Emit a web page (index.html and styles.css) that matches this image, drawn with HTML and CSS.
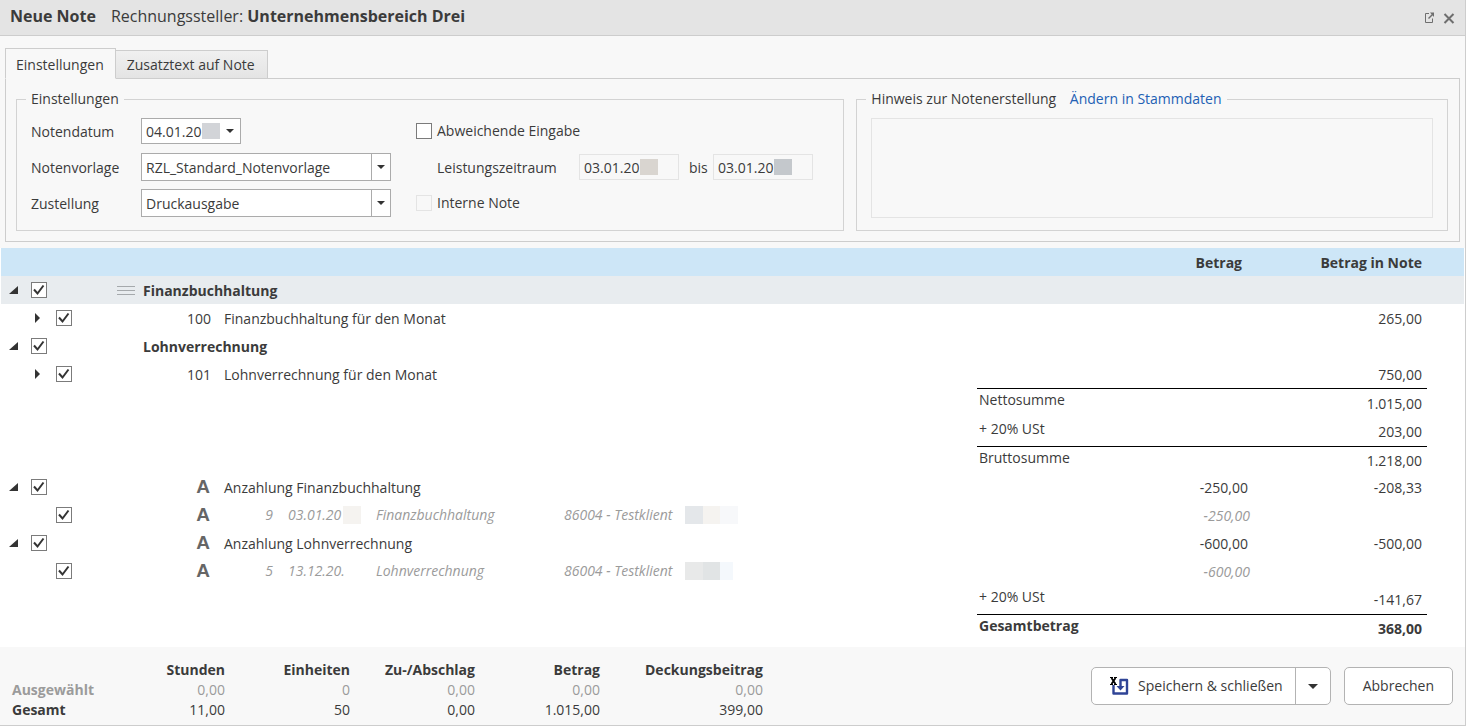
FILE: index.html
```html
<!DOCTYPE html>
<html lang="de">
<head>
<meta charset="utf-8">
<title>Neue Note</title>
<link rel="stylesheet" href="styles.css">
</head>
<body>
<main class="window">
  <header class="titlebar">
    <h1 class="title">Neue Note</h1>
    <p class="issuer">Rechnungssteller: <strong>Unternehmensbereich Drei</strong></p>
    <div class="window-actions">
      <button type="button" class="icon-button" aria-label="In eigenem Fenster öffnen">
        <svg width="12" height="12" viewBox="0 0 12 12" fill="none" stroke="#6e6e6e"><path d="M6 1.500H2.500V10.500H9.500V6.500"/><path d="M5.500 6.500L9.500 2.500" stroke-width="1.500"/><path d="M7 0.500H11V5Z" fill="#6e6e6e" stroke="none"/></svg>
      </button>
      <button type="button" class="icon-button" aria-label="Schließen">
        <svg width="12" height="12" viewBox="0 0 12 12" fill="none" stroke="#6e6e6e" stroke-width="2"><path d="M1.500 2L10.500 11M10.500 2L1.500 11"/></svg>
      </button>
    </div>
  </header>

  <section class="settings">
    <div class="tabs" role="tablist">
      <button type="button" class="tab tab-active" role="tab" aria-selected="true">Einstellungen</button>
      <button type="button" class="tab" role="tab" aria-selected="false">Zusatztext auf Note</button>
    </div>
    <div class="tab-panel" role="tabpanel">
      <fieldset class="group">
        <legend>Einstellungen</legend>
        <div class="form">
          <div class="form-left">
            <label for="date">Notendatum</label>
            <div class="date-box">
              <input id="date" class="date-input" type="text" value="04.01.20">
              <span class="mask mask-a"></span>
              <button type="button" class="date-open" aria-label="Kalender öffnen"><span class="caret"></span></button>
            </div>
            <label for="template">Notenvorlage</label>
            <div class="combo">
              <select id="template"><option>RZL_Standard_Notenvorlage</option></select>
              <span class="combo-arrow"><span class="caret"></span></span>
            </div>
            <label for="delivery">Zustellung</label>
            <div class="combo">
              <select id="delivery"><option>Druckausgabe</option></select>
              <span class="combo-arrow"><span class="caret"></span></span>
            </div>
          </div>
          <div class="form-right">
            <label class="check-label"><input type="checkbox" class="check">Abweichende Eingabe</label>
            <div class="period">
              <label class="period-label" for="from">Leistungszeitraum</label>
              <div class="date-box date-off">
                <input id="from" class="date-input" type="text" value="03.01.20" disabled>
                <span class="mask mask-b"></span>
              </div>
              <label class="until" for="to">bis</label>
              <div class="date-box date-off">
                <input id="to" class="date-input" type="text" value="03.01.20" disabled>
                <span class="mask mask-c"></span>
              </div>
            </div>
            <label class="check-label"><input type="checkbox" class="check" disabled>Interne Note</label>
          </div>
        </div>
      </fieldset>
      <fieldset class="group group-note">
        <legend>Hinweis zur Notenerstellung <a class="link" href="#">Ändern in Stammdaten</a></legend>
        <textarea class="note" aria-label="Hinweis zur Notenerstellung" disabled></textarea>
      </fieldset>
    </div>
  </section>

  <div class="items-wrap">
  <table class="items">
    <colgroup>
      <col class="col-tree"><col class="col-handle"><col class="col-number"><col class="col-text"><col class="col-sum"><col class="col-amount"><col class="col-note"><col class="col-end">
    </colgroup>
    <thead>
      <tr><th></th><th></th><th></th><th></th><th></th><th class="num head-amount">Betrag</th><th class="num">Betrag in Note</th><th></th></tr>
    </thead>
    <tbody>
      <tr class="selected">
        <td><div class="tree"><button type="button" class="toggle open" aria-label="Zuklappen"></button><input type="checkbox" class="check" aria-label="Finanzbuchhaltung" checked></div></td>
        <td><div class="handle"></div></td>
        <td colspan="2" class="strong">Finanzbuchhaltung</td>
        <td></td><td></td><td></td><td></td>
      </tr>
      <tr>
        <td><div class="tree child"><button type="button" class="toggle" aria-label="Aufklappen"></button><input type="checkbox" class="check" aria-label="Finanzbuchhaltung für den Monat" checked></div></td>
        <td></td><td class="code">100</td><td>Finanzbuchhaltung für den Monat</td>
        <td></td><td></td><td class="num">265,00</td><td></td>
      </tr>
      <tr>
        <td><div class="tree"><button type="button" class="toggle open" aria-label="Zuklappen"></button><input type="checkbox" class="check" aria-label="Lohnverrechnung" checked></div></td>
        <td></td>
        <td colspan="2" class="strong">Lohnverrechnung</td>
        <td></td><td></td><td></td><td></td>
      </tr>
      <tr>
        <td><div class="tree child"><button type="button" class="toggle" aria-label="Aufklappen"></button><input type="checkbox" class="check" aria-label="Lohnverrechnung für den Monat" checked></div></td>
        <td></td><td class="code">101</td><td>Lohnverrechnung für den Monat</td>
        <td></td><td></td><td class="num">750,00</td><td></td>
      </tr>
      <tr class="sum ruled">
        <td colspan="4"></td><td class="line label">Nettosumme</td><td class="line"></td><td class="line num">1.015,00</td><td></td>
      </tr>
      <tr class="sum">
        <td colspan="4"></td><td class="label">+ 20% USt</td><td></td><td class="num">203,00</td><td></td>
      </tr>
      <tr class="sum ruled brutto">
        <td colspan="4"></td><td class="line label">Bruttosumme</td><td class="line"></td><td class="line num">1.218,00</td><td></td>
      </tr>
      <tr>
        <td><div class="tree"><button type="button" class="toggle open" aria-label="Zuklappen"></button><input type="checkbox" class="check" aria-label="Anzahlung Finanzbuchhaltung" checked></div></td>
        <td></td><td class="code kind">A</td><td>Anzahlung Finanzbuchhaltung</td>
        <td></td><td class="num">-250,00</td><td class="num">-208,33</td><td></td>
      </tr>
      <tr>
        <td><div class="tree child leaf"><input type="checkbox" class="check" aria-label="Anzahlung 9" checked></div></td>
        <td></td><td class="code kind">A</td>
        <td><div class="detail"><span class="detail-no">9</span><span class="detail-date">03.01.20<i class="mask mask-d"></i></span><span class="detail-text">Finanzbuchhaltung</span><span class="detail-client">86004 - Testklient</span><i class="mask mask-e"></i></div></td>
        <td></td><td class="num faint">-250,00</td><td></td><td></td>
      </tr>
      <tr>
        <td><div class="tree"><button type="button" class="toggle open" aria-label="Zuklappen"></button><input type="checkbox" class="check" aria-label="Anzahlung Lohnverrechnung" checked></div></td>
        <td></td><td class="code kind">A</td><td>Anzahlung Lohnverrechnung</td>
        <td></td><td class="num">-600,00</td><td class="num">-500,00</td><td></td>
      </tr>
      <tr>
        <td><div class="tree child leaf"><input type="checkbox" class="check" aria-label="Anzahlung 5" checked></div></td>
        <td></td><td class="code kind">A</td>
        <td><div class="detail"><span class="detail-no">5</span><span class="detail-date">13.12.20.</span><span class="detail-text">Lohnverrechnung</span><span class="detail-client">86004 - Testklient</span><i class="mask mask-f"></i></div></td>
        <td></td><td class="num faint">-600,00</td><td></td><td></td>
      </tr>
      <tr class="sum">
        <td colspan="4"></td><td class="label">+ 20% USt</td><td></td><td class="num">-141,67</td><td></td>
      </tr>
      <tr class="sum ruled strong">
        <td colspan="4"></td><td class="line label">Gesamtbetrag</td><td class="line"></td><td class="line num">368,00</td><td></td>
      </tr>
    </tbody>
  </table>
  </div>

  <footer class="footer">
    <table class="totals">
      <colgroup><col class="t-label"><col class="t-first"><col class="t-mid"><col class="t-mid"><col class="t-mid"><col class="t-last"></colgroup>
      <thead><tr><td></td><th>Stunden</th><th>Einheiten</th><th>Zu-/Abschlag</th><th>Betrag</th><th>Deckungsbeitrag</th></tr></thead>
      <tbody>
        <tr class="muted"><th>Ausgewählt</th><td>0,00</td><td>0</td><td>0,00</td><td>0,00</td><td>0,00</td></tr>
        <tr><th>Gesamt</th><td>11,00</td><td>50</td><td>0,00</td><td>1.015,00</td><td>399,00</td></tr>
      </tbody>
    </table>
    <div class="actions">
      <div class="split">
        <button type="button" class="save">
          <svg width="20" height="20" viewBox="0 0 20 20" fill="none"><path d="M3.500 9V17.500H17V4H10.500V10" stroke="#2f4496" stroke-width="2.400" stroke-linejoin="round"/><path d="M6.500 10H14.500L10.500 14.500Z" fill="#2f4496"/><path d="M1.500 2L5.500 8M5.500 2L1.500 8" stroke="#000" stroke-width="1.800"/><path d="M0 1.500H3M4 1.500H7M0 8.500H3M4 8.500H7" stroke="#000"/></svg>
          Speichern &amp; schließen
        </button>
        <button type="button" class="save-more" aria-label="Weitere Optionen"><span class="caret caret-large"></span></button>
      </div>
      <button type="button" class="cancel">Abbrechen</button>
    </div>
  </footer>
</main>
</body>
</html>
```
FILE: styles.css
```css
* { box-sizing: border-box; }

body {
  margin: 0;
  background: #fff;
  color: #3b3b3b;
  font: 14px/20px "Open Sans", "Noto Sans", sans-serif;
}

button, input, select, textarea {
  margin: 0;
  padding: 0;
  border: 0;
  background: none;
  color: inherit;
  font: inherit;
}

.window {
  display: flex;
  flex-direction: column;
  min-height: 100vh;
  margin-right: 1px;
  border: solid #cdcdcd;
  border-width: 0 1px 1px 0;
  background: #f8f8f8;
}

/* Title bar */
.titlebar {
  display: flex;
  align-items: center;
  gap: 15px;
  height: 36px;
  padding: 0 10px 3px;
  border-bottom: 1px solid #cdcdcd;
  background: #e4e4e4;
}
.title, .issuer { margin: 0; font-size: 16px; }
.title, .issuer strong { font-weight: 700; }
.window-actions { display: flex; gap: 8px; margin-left: auto; }
.icon-button { display: flex; padding-top: 3px; }

/* Tabs */
.settings { padding: 12px 5px 6px; }
.tabs { display: flex; align-items: flex-end; }
.tab {
  height: 29px;
  margin-bottom: -1px;
  padding: 0 12px 0 11px;
  border: 1px solid #cdcdcd;
  border-left: 0;
  background: linear-gradient(#f0f0f0, #e4e4e4);
}
.tab-active {
  height: 31px;
  padding: 2px 11px 0 10px;
  border-left: 1px solid #cdcdcd;
  border-bottom-color: #f8f8f8;
  background: #f8f8f8;
}
.tab-panel {
  display: grid;
  grid-template-columns: 7fr 5fr;
  gap: 12px;
  padding: 10px 11px 10px 10px;
  border: 1px solid #cdcdcd;
}

.group {
  min-width: 0;
  margin: 0;
  padding: 9px 14px 12px;
  border: 1px solid #d3d3d3;
}
.group legend { margin-left: -5px; padding: 0 5px; }
.link { margin-left: 10px; color: #2260b4; text-decoration: none; }
.group-note { display: flex; }
.note {
  flex: 1;
  height: 100px;
  border: 1px solid #e4e4e4;
  resize: none;
}

/* Form */
.form { display: flex; gap: 25px; }
.form-left {
  display: grid;
  grid-template-columns: 110px 250px;
  grid-auto-rows: 28px;
  row-gap: 8px;
  align-items: center;
}
.form-right {
  display: grid;
  grid-auto-rows: 28px;
  row-gap: 8px;
  align-items: center;
}
.form-left, .form-right { margin-top: -1px; }

.date-box {
  display: flex;
  align-items: center;
  width: 100px;
  height: 26px;
  padding-left: 4px;
  border: 1px solid #ababab;
  background: #fff;
}
.date-off { border-color: #e4e4e4; background: none; }
.date-input { width: 56px; height: 24px; }
.date-open { display: flex; flex: 1; justify-content: center; }

.combo { position: relative; height: 28px; border: 1px solid #ababab; background: #fff; }
.combo select { width: 100%; height: 26px; padding: 1px 24px 0 4px; appearance: none; }
.combo-arrow {
  position: absolute;
  top: 0;
  right: 0;
  bottom: 0;
  display: flex;
  align-items: center;
  justify-content: center;
  width: 19px;
  border-left: 1px solid #ababab;
  pointer-events: none;
}
.caret { border: 4px solid transparent; border-top-color: #333; border-bottom: 0; }
.caret-large { border-width: 5px 5px 0; }

.form-left label, .period-label, .until { padding-top: 1px; }
.check-label { display: flex; align-items: center; gap: 5px; }
.period { display: flex; align-items: center; padding-left: 21px; }
.period-label { width: 142px; }
.until { width: 34px; padding-left: 10px; }

.check {
  flex: none;
  width: 16px;
  height: 16px;
  border: 1px solid #7b7b7b;
  background: #fff;
  appearance: none;
}
.check:checked {
  background: #fff url("data:image/svg+xml,%3Csvg xmlns='http://www.w3.org/2000/svg' viewBox='0 0 14 14'%3E%3Cpath d='M2 6.500L5.500 10.500L11.500 2.500' fill='none' stroke='%23333' stroke-width='2'/%3E%3C/svg%3E");
}
.check:disabled { border-color: #e4e4e4; background: none; }

/* Blanked-out values */
.mask { flex: none; width: 18px; height: 16px; }
.mask-a { background: #d2d4d8; }
.mask-b { background: #d9d5d0; }
.mask-c { background: #c4c8cc; }
.mask-d { height: 18px; background: #f5f3f0; }
.mask-e { width: 53px; height: 18px; background: linear-gradient(90deg, #e4e7ea 18px, #f5f3f0 18px 35px, #f7f8fa 35px); }
.mask-f { width: 48px; height: 18px; background: linear-gradient(90deg, #e8e9e9 18px, #e1e4e5 18px 35px, #f4f8fc 35px); }

/* Item table */
.items-wrap { flex: 1; padding: 0 1px 4px; background: #fff; }
.items { width: 100%; border-spacing: 0; table-layout: fixed; }
.col-tree { width: 111px; }
.col-handle { width: 31px; }
.col-number { width: 81px; }
.col-sum { width: 150px; }
.col-amount { width: 128px; }
.col-note { width: 172px; }
.col-end { width: 37px; }
.items th, .items td { height: 28px; padding: 1px 0 0; white-space: nowrap; text-align: left; }
.items thead th { background: #cde6f7; font-weight: 700; }
.items .selected td { background: #e8ecef; }
.strong, .items .strong { font-weight: 700; }
.items .num { padding-right: 5px; text-align: right; }
.items .num:nth-last-child(3) { padding-right: 7px; }
.items .head-amount:nth-last-child(3) { padding-right: 13px; }
.items .code { padding-right: 13px; text-align: right; }
.items .kind { padding: 0 14px 0 0; color: #666; font: 700 19px/20px "Liberation Sans", sans-serif; }
.items .faint { color: #9b9b9b; font-style: italic; }
.items .faint:nth-last-child(3) { padding-right: 5px; }
.items .sum td { height: 29px; }
.items .brutto td { height: 27px; }
.items .line { border-top: 1px solid #000; }
.items .sum .num { padding-top: 0; }
.items .ruled .num { padding-top: 1px; }
.items .strong .num { padding-top: 0; }
.items .sum .label { padding: 2px 0 0 2px; vertical-align: top; }
.items .ruled .label { padding-top: 1px; }

.tree { display: flex; align-items: center; gap: 13px; height: 27px; padding: 0 0 1px 8px; }
.child { gap: 16px; padding-left: 34px; }
.leaf { padding-left: 55px; }
.toggle {
  width: 5px;
  height: 10px;
  background: #333;
  clip-path: polygon(0 0, 100% 50%, 0 100%);
}
.toggle.open { width: 9px; height: 8px; clip-path: polygon(100% 0, 100% 100%, 0 100%); }
.handle {
  width: 18px;
  height: 9px;
  margin-left: 5px;
  background: linear-gradient(#a5a9ac 1px, transparent 1px 4px, #a5a9ac 4px 5px, transparent 5px 8px, #a5a9ac 8px);
}

.detail { display: flex; align-items: center; height: 26px; padding-bottom: 1px; color: #9b9b9b; font-style: italic; }
.detail-no { width: 49px; text-align: right; }
.detail-date { display: flex; align-items: center; gap: 2px; width: 103px; padding-left: 15px; }
.detail-text { width: 188px; }
.detail-client { width: 121px; }

/* Footer */
.footer { display: flex; align-items: flex-start; justify-content: space-between; padding: 13px 12px 5px; }
.totals { border-spacing: 0; table-layout: fixed; width: 751px; }
.totals th, .totals td { height: 20px; padding: 0; text-align: right; }
.totals th { font-weight: 700; }
.totals tbody th { text-align: left; }
.muted { color: #9b9b9b; }
.t-label { width: 90px; }
.t-first { width: 123px; }
.t-mid { width: 125px; }
.t-last { width: 163px; }

.actions { display: flex; gap: 13px; padding-top: 7px; }
.split, .cancel { display: flex; height: 38px; border: 1px solid #b3b3b3; border-radius: 5px; background: #fff; }
.save { display: flex; align-items: center; gap: 8px; padding: 0 12px 0 18px; }
.save-more { display: flex; align-items: center; justify-content: center; width: 35px; border-left: 1px solid #b3b3b3; }
.cancel { align-items: center; padding: 0 18px; }
```
